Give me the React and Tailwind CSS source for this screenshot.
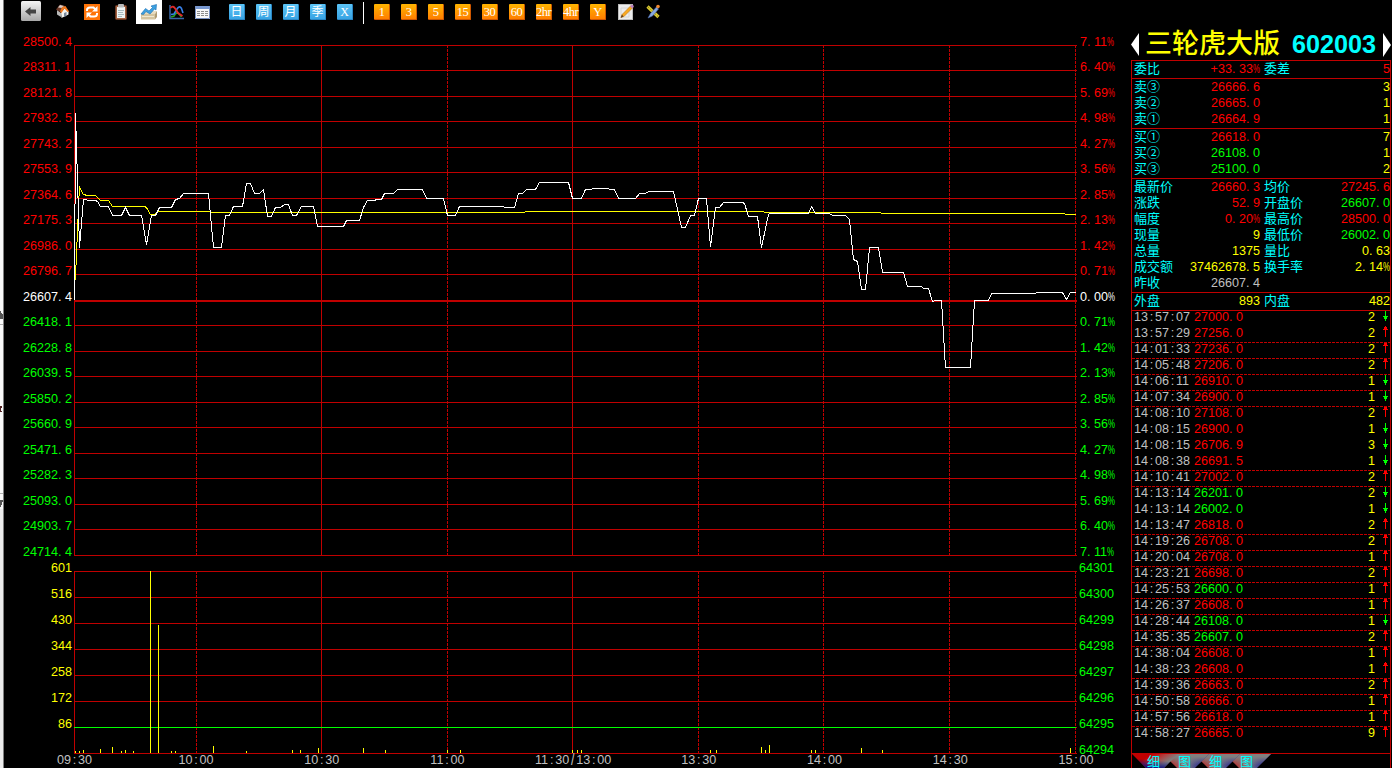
/**
 * 分時走勢畫面：工具列、分時圖、成交量、盤口與逐筆明細
 */

const CJK = "font-['Liberation_Sans','Noto_Sans_CJK_SC',sans-serif]";

// 價格刻度
const PRICES = [
  "28500.4", "28311.1", "28121.8", "27932.5", "27743.2", "27553.9", "27364.6",
  "27175.3", "26986.0", "26796.7", "26607.4", "26418.1", "26228.8", "26039.5",
  "25850.2", "25660.9", "25471.6", "25282.3", "25093.0", "24903.7", "24714.4",
];
const PERCENTS = [
  "7.11%", "6.40%", "5.69%", "4.98%", "4.27%", "3.56%", "2.85%", "2.13%", "1.42%", "0.71%", "0.00%",
  "0.71%", "1.42%", "2.13%", "2.85%", "3.56%", "4.27%", "4.98%", "5.69%", "6.40%", "7.11%",
];
const VOLUMES = ["601", "516", "430", "344", "258", "172", "86"];
const TOTALS = ["64301", "64300", "64299", "64298", "64297", "64296", "64295", "64294"];
const TIMES = ["10:00", "10:30", "11:00", "11:30/13:00", "13:30", "14:00", "14:30", "15:00"];

// 圖表座標 (x, y)
const PRICE_LINE =
  "74,300 75,113 79,247 83,199 86,199 87,200 95,200 97,201 100,206 108,206 112,215 121,215 125,207 129,215 141,215 146,244 151,215 155,215 159,207 171,207 175,199 179,198 183,193 208,193 213,247 221,247 225,215 229,215 233,206 242,206 246,183 250,183 254,193 259,193 263,189 267,216 271,216 275,207 280,207 284,204 288,204 292,215 296,215 301,206 313,206 317,226 343,226 346,220 359,220 363,207 367,200 374,200 376,199 381,199 384,193 393,193 397,189 422,189 426,198 443,198 447,215 455,215 459,206 503,206 504,207 514,207 518,193 522,193 526,189 535,189 539,182 568,182 572,198 581,198 585,189 591,189 592,188 608,188 609,189 614,189 618,198 635,198 639,193 645,193 648,191 673,191 681,227 685,227 690,215 694,215 698,198 706,198 710,246 715,207 719,207 723,202 742,202 744,203 748,216 757,216 761,247 765,228 768,214 769,213 808,213 811,206 815,213 829,213 832,215 845,215 849,219 853,259 857,261 861,289 865,289 869,247 878,247 882,272 903,272 907,286 921,286 923,288 928,288 932,301 935,300 941,300 945,367 970,367 974,300 988,300 991,293 1035,293 1036,292 1062,292 1066,299 1070,292 1075,292";
const AVG_LINE =
  "75,280 76,251 77,233 78,205 79,187 83,194 87,195 95,195 100,200 108,200 112,206 144,206 146,207 150,214 154,214 158,211 210,211 211,212 524,212 525,211 763,211 764,212 880,212 881,213 1064,213 1065,214 1075,214";
const BARS = [
  [75, 2], [79, 2], [83, 3], [100, 4], [112, 6], [121, 2], [125, 3], [133, 2], [150, 182], [158, 128],
  [171, 2], [175, 2], [213, 7], [246, 2], [292, 3], [300, 3], [318, 5], [363, 5], [385, 3], [447, 3],
  [460, 3], [572, 3], [577, 3], [581, 3], [710, 3], [716, 3], [761, 6], [765, 3], [769, 8], [811, 3],
  [815, 3], [861, 5], [882, 3], [1070, 5],
];
const V_LINES = [74, 196, 321, 447, 572, 698, 823, 949, 1075];
const SOLID = [74, 321, 572];

const RED = "text-[#ff0000]";
const GREEN = "text-[#00ff00]";
const YELLOW = "text-[#ffff00]";
const SILVER = "text-[#c0c0c0]";

const SELLS = [
  ["卖③", "26666.6", RED, "3"],
  ["卖②", "26665.0", RED, "1"],
  ["卖①", "26664.9", RED, "1"],
];
const BUYS = [
  ["买①", "26618.0", RED, "7"],
  ["买②", "26108.0", GREEN, "1"],
  ["买③", "25100.0", GREEN, "2"],
];
const STATS = [
  ["最新价", "26660.3", RED, "均价", "27245.6", RED],
  ["涨跌", "52.9", RED, "开盘价", "26607.0", GREEN],
  ["幅度", "0.20%", RED, "最高价", "28500.0", RED],
  ["现量", "9", YELLOW, "最低价", "26002.0", GREEN],
  ["总量", "1375", YELLOW, "量比", "0.63", YELLOW],
  ["成交额", "37462678.5", YELLOW, "换手率", "2.14%", YELLOW],
  ["昨收", "26607.4", SILVER, "", "", SILVER],
];

// 時間、價格、數量、是否上漲
const TICKS = [
  ["13:57:07", "27000.0", 2, false],
  ["13:57:29", "27256.0", 2, true],
  ["14:01:33", "27236.0", 2, true],
  ["14:05:48", "27206.0", 2, true],
  ["14:06:11", "26910.0", 1, false],
  ["14:07:34", "26900.0", 1, false],
  ["14:08:10", "27108.0", 2, true],
  ["14:08:15", "26900.0", 1, false],
  ["14:08:15", "26706.9", 3, false],
  ["14:08:38", "26691.5", 1, false],
  ["14:10:41", "27002.0", 2, true],
  ["14:13:14", "26201.0", 2, false],
  ["14:13:14", "26002.0", 1, false],
  ["14:13:47", "26818.0", 2, true],
  ["14:19:26", "26708.0", 2, true],
  ["14:20:04", "26708.0", 1, true],
  ["14:23:21", "26698.0", 2, true],
  ["14:25:53", "26600.0", 1, true],
  ["14:26:37", "26608.0", 1, true],
  ["14:28:44", "26108.0", 1, false],
  ["14:35:35", "26607.0", 2, true],
  ["14:38:04", "26608.0", 1, true],
  ["14:38:23", "26608.0", 1, true],
  ["14:39:36", "26663.0", 2, true],
  ["14:50:58", "26666.0", 1, true],
  ["14:57:56", "26618.0", 1, true],
  ["14:58:27", "26665.0", 9, true],
];

// 標點在 7px 字格內的位置
const CELLS = {
  ".": "text-left",
  ":": "text-center",
  "/": "text-center scale-y-[1.25]",
  "%": "origin-left scale-x-[0.62]",
};

// 等寬數字，每字 7px
function Num({ children, className = "" }) {
  const parts = String(children).split(/([.:/%])/).filter(Boolean);
  return (
    <span
      className={`block font-['Liberation_Sans',sans-serif] text-[12.6px] leading-4 whitespace-nowrap ${className}`}
    >
      {parts.map((part, i) =>
        CELLS[part] ? (
          <span key={i} className={`inline-block w-[7px] ${CELLS[part]}`}>
            {part}
          </span>
        ) : (
          part
        )
      )}
    </span>
  );
}

function BlueButton({ children }) {
  return (
    <div className="w-4 h-4 mr-[11px] rounded-[1px] bg-gradient-to-b from-[#5cc4f6] to-[#38a4e4] border-b border-r border-[#2a86c4] text-white text-[12px] leading-[17px] text-center font-['Liberation_Serif','Noto_Sans_CJK_SC',serif]">
      {children}
    </div>
  );
}

function OrangeButton({ children }) {
  return (
    <div className="w-4 h-4 mr-[11px] rounded-[1px] bg-gradient-to-b from-[#ffb400] to-[#ff7e00] border-b border-r border-[#d05800] flex justify-center text-white text-[12.5px] leading-[16px] tracking-[-0.5px] font-['Liberation_Serif',serif]">
      {children}
    </div>
  );
}

function Toolbar() {
  return (
    <div className="h-6 flex items-center">
      <svg className="ml-[17px] -mt-[2px]" width="20" height="20">
        <defs>
          <linearGradient id="back" x2="0" y2="1">
            <stop offset="0" stopColor="#f4f4f4" />
            <stop offset="1" stopColor="#a8a8a8" />
          </linearGradient>
        </defs>
        <rect width="20" height="20" rx="1.5" fill="url(#back)" />
        <path d="M4 10.5 L9.5 6 V8.5 H15 V12.5 H9.5 V15 Z" fill="#444" />
      </svg>
      <svg className="ml-[14px] -mt-[2px]" width="16" height="16">
        <path d="M2 7 L6 10 V14 L2 11.5 Z" fill="#b8b8b8" />
        <path d="M6 9 L10 5 L13.5 8 V11.5 L6.5 15 Z" fill="#f4f4f0" />
        <path d="M1 6.5 L5 1.5 L10 3 L6 9.5 Z" fill="#6c3a28" />
        <path d="M3 4.5 L5 2 L9 3 L7 5 Z" fill="#d8ccc8" />
        <path d="M7 4 L10.5 3 L14 8.5 L12.5 9 L9.5 5.5 L6.5 10 L5 8.5 Z" fill="#f07a20" />
        <path d="M9 10 L11.5 9 V13 L9 14 Z" fill="#78889c" />
      </svg>
      <svg className="ml-[13px]" width="16" height="16">
        <rect width="16" height="16" fill="#ff7408" />
        <g fill="none" stroke="#fff" strokeWidth="2">
          <path d="M3 7 V6 Q3 3.5 6 3.5 H9.5 L12 6" />
          <path d="M13 9 V10 Q13 12.5 10 12.5 H6.5 L4 10" />
        </g>
        <path d="M13.5 2 V7.5 H8 Z M2.5 14 V8.5 H8 Z" fill="#fff" />
      </svg>
      <svg className="ml-[15px]" width="12" height="16">
        <rect x="0.5" y="1.5" width="11" height="14" rx="1" fill="#a06040" stroke="#6c3820" />
        <rect x="2" y="3" width="8" height="11" fill="#eef4f4" />
        <rect x="3" y="0" width="6" height="3.5" rx="1" fill="#b8b8b8" />
        <path d="M3 6.5h6M3 8.5h5M3 10.5h6M3 12.5h4" stroke="#a8bcc0" />
      </svg>
      <div className="w-[26px] h-6 ml-[9px] bg-white flex items-center justify-center">
        <svg width="18" height="16">
          <path d="M1 10 L4 7 H17 L15 10 Z" fill="#e8dcc0" />
          <rect x="1" y="10" width="14" height="5.5" fill="#d4c4a0" />
          <path d="M15 10 L17 7 V13 L15 15.5 Z" fill="#b09c74" />
          <path d="M2 12.5h12" stroke="#f0e8d0" />
          <path d="M1 10 L5.5 4.5 L9 7 L12.5 3.5 L11 2 L16.5 0.5 L16 6 L14.5 5 L10 10 L6 7.5 L3.5 10.5 Z" fill="#3ca0e0" stroke="#1c70b4" strokeWidth="0.6" />
        </svg>
      </div>
      <svg className="ml-[7px]" width="15" height="15">
        <path d="M1 0 V13.5 H15" fill="none" stroke="#3868a8" strokeWidth="1.5" />
        <path d="M2 12 L5 11 Q8 6 10 9 L12.5 12" fill="none" stroke="#28a028" strokeWidth="1.6" />
        <path d="M2 9.5 L5 9 L8 4 Q10.5 0 12.5 3.5 L14 8" fill="none" stroke="#3880e8" strokeWidth="1.6" />
        <path d="M1.5 3 Q4 0 6.5 4 L9 8 L13.5 11" fill="none" stroke="#e02828" strokeWidth="1.8" />
      </svg>
      <svg className="ml-[11px]" width="15" height="13">
        <rect width="15" height="13" fill="#f8f8f8" />
        <rect width="15" height="3" fill="#7898d0" />
        <path d="M0.5 0 V12.5 H14.5 V0" fill="none" stroke="#7890c0" />
        <path d="M2 5.5h11M2 7.5h11M2 9.5h11" stroke="#8c8c8c" strokeDasharray="3 1" />
      </svg>
      <div className="w-[19px]" />
      {["日", "周", "月", "季", "X"].map((label) => (
        <BlueButton key={label}>{label}</BlueButton>
      ))}
      <div className="w-px h-[22px] mt-[2px] -ml-px mr-[10px] bg-white" />
      {["1", "3", "5", "15", "30", "60", "2hr", "4hr", "Y"].map((label) => (
        <OrangeButton key={label}>{label}</OrangeButton>
      ))}
      <svg className="ml-[1px]" width="16" height="16">
        <rect x="0.5" y="0.5" width="14" height="15" fill="#ececec" stroke="#bcbcbc" />
        <path d="M3 4h8v9h-8z" fill="none" stroke="#d4d4d4" />
        <path d="M3 13.5 L4 10.5 L13 1.5 L15 3.5 L6 12.5 Z" fill="#f8a820" stroke="#b07018" strokeWidth="0.5" />
        <path d="M12 2.5 L14 0.5 L16 2 L14.5 4.5 Z" fill="#b880c0" />
        <path d="M2.5 14 L4 10.5 L5.5 12.5 Z" fill="#604020" />
      </svg>
      <svg className="ml-[12px]" width="15" height="16">
        <path d="M1.5 2.5 L12.5 13" stroke="#d8c830" strokeWidth="3.2" />
        <path d="M2 3 L12 12.5" stroke="#706408" strokeWidth="1" strokeDasharray="1 1.5" />
        <path d="M2 14 L4.5 9.5 L10.5 3 L12.5 5 L6.5 12 Z" fill="#88a8e0" stroke="#4868a8" strokeWidth="0.6" />
        <circle cx="12" cy="2.5" r="1.8" fill="#f08830" />
      </svg>
    </div>
  );
}

// 價格與漲跌幅刻度，中線以上紅、以下綠
function PriceScale({ labels }) {
  return (
    <div className="flex flex-col">
      {labels.map((label, i) => (
        <div key={i} className={i === 20 ? "h-4" : i % 2 ? "h-[26px]" : "h-[25px]"}>
          <Num className={i < 10 ? RED : i === 10 ? "text-white" : GREEN}>{label}</Num>
        </div>
      ))}
    </div>
  );
}

function VolumeScale({ labels, className }) {
  return (
    <div className={`flex flex-col gap-[10px] ${className}`}>
      {labels.map((label) => (
        <Num key={label}>{label}</Num>
      ))}
    </div>
  );
}

function Chart() {
  const priceRows = PRICES.map((_, i) => 45 + Math.floor(i * 25.5));
  const volumeRows = TOTALS.map((_, i) => 571 + i * 26);
  return (
    <svg width="1004" height="731" viewBox="74 24 1004 731" shapeRendering="crispEdges" className="block">
      <g stroke="#c00000">
        {priceRows.map((y) => (
          <path key={y} d={`M74 ${y + 0.5}H1077`} />
        ))}
        <path d="M74 301.5H1077" />
        {volumeRows.map((y) => (
          <path key={y} d={`M74 ${y + 0.5}H1077`} />
        ))}
        {V_LINES.map((x) => (
          <path
            key={x}
            d={`M${x + 0.5} 45V556M${x + 0.5} 571V754`}
            strokeDasharray={SOLID.includes(x) ? undefined : "3 1"}
          />
        ))}
      </g>
      <path d="M74 727.5H1076" stroke="#00ff00" />
      {BARS.map(([x, h]) => (
        <rect key={x} x={x} y={753 - h} width="1" height={h} fill="#ffff00" />
      ))}
      <g fill="none" transform="translate(0.5 0.5)">
        <polyline points={AVG_LINE} stroke="#ffff00" />
        <polyline points={PRICE_LINE} stroke="#ffffff" />
      </g>
    </svg>
  );
}

function Label({ children, className = "" }) {
  return (
    <span className={`text-[#00ffff] text-[13px] leading-4 whitespace-nowrap ${CJK} ${className}`}>{children}</span>
  );
}

// 左右兩欄的一行報價
function QuoteRow({ left, value, color, right, value2, color2 }) {
  return (
    <div className="h-4 flex">
      <div className="w-[128px] pl-[2px] flex justify-between">
        <Label>{left}</Label>
        {value && <Num className={color}>{value}</Num>}
      </div>
      <div className="flex-1 pl-1 flex justify-between">
        <Label>{right}</Label>
        {value2 && <Num className={color2}>{value2}</Num>}
      </div>
    </div>
  );
}

function Arrow({ up }) {
  return (
    <svg width="5" height="12" shapeRendering="crispEdges" className="mr-[2px]">
      {up ? (
        <path d="M2 0h1v11h-1zM1 1h3v2h-3zM0 3h5v1h-5z" fill="#ff0000" />
      ) : (
        <path d="M2 1h1v10h-1zM0 6h5v1h-5zM1 7h3v2h-3z" fill="#00ff00" />
      )}
    </svg>
  );
}

function Tabs() {
  return (
    <div className="relative h-[14px] overflow-hidden">
      <svg width="140" height="14" className="block">
        <defs>
          <linearGradient id="tabOn" x1="0" y1="0" x2="1" y2="0.5">
            <stop offset="0.35" stopColor="#c00000" />
            <stop offset="0.6" stopColor="#b04040" />
            <stop offset="0.85" stopColor="#808080" />
          </linearGradient>
          <linearGradient id="tabOff" x1="0" y1="0.6" x2="1" y2="0.6">
            <stop offset="0.15" stopColor="#c02020" />
            <stop offset="0.5" stopColor="#808080" />
            <stop offset="0.8" stopColor="#303090" />
          </linearGradient>
          <linearGradient id="tabTop" x2="0" y2="1">
            <stop offset="0.2" stopColor="#808080" />
            <stop offset="0.8" stopColor="#808080" stopOpacity="0" />
          </linearGradient>
          <linearGradient id="tabBlue" x1="0.5" y1="0" x2="0.2" y2="1">
            <stop offset="0.4" stopColor="#000080" stopOpacity="0" />
            <stop offset="1" stopColor="#000080" />
          </linearGradient>
        </defs>
        {[93, 62, 31].map((x) => (
          <g key={x}>
            <path d={`M${x} 0h46l-14 14h-18z`} fill="url(#tabOff)" />
            <path d={`M${x} 0h46l-14 14h-18z`} fill="url(#tabTop)" />
          </g>
        ))}
        <path d="M0 0h46l-14 14h-18z" fill="url(#tabOn)" />
        <path d="M0 0h46l-14 14h-18z" fill="url(#tabBlue)" />
      </svg>
      <div className="absolute left-[15px] top-0 flex gap-[18px]">
        {["细", "图", "细", "图"].map((t, i) => (
          <Label key={i}>{t}</Label>
        ))}
      </div>
    </div>
  );
}

function QuotePanel() {
  return (
    <div className="w-[260px] flex flex-col">
      <div className="h-9 flex items-center">
        <svg width="8" height="24" className="mt-[6px]">
          <path d="M8 0V23L0 11.5Z" fill="#fff" />
        </svg>
        <span className={`ml-[6px] mt-[3px] text-[27px] leading-9 font-medium text-[#ffff00] whitespace-nowrap ${CJK}`}>
          三轮虎大版
        </span>
        <span className="ml-[12px] mt-[3px] text-[25.2px] leading-9 font-bold text-[#00ffff] font-['Liberation_Sans',sans-serif]">
          602003
        </span>
        <svg width="8" height="24" className="ml-auto mt-[6px] shrink-0">
          <path d="M0 0V24L8 12Z" fill="#fff" />
        </svg>
      </div>

      <div className="h-[708px] border-x border-[#c00000] flex flex-col">
        <div className="h-[18px] border-t border-[#c00000]">
          <QuoteRow left="委比" value="+33.33%" color={RED} right="委差" value2="5" color2={RED} />
        </div>
        {[SELLS, BUYS].map((rows, i) => (
          <div key={i} className="h-[50px] border-t border-[#c00000]">
            {rows.map(([name, price, color, qty]) => (
              <QuoteRow key={name} left={name} value={price} color={color} value2={qty} color2={YELLOW} />
            ))}
          </div>
        ))}
        <div className="h-[114px] border-t border-[#c00000]">
          {STATS.map(([left, value, color, right, value2, color2]) => (
            <QuoteRow key={left} {...{ left, value, color, right, value2, color2 }} />
          ))}
        </div>
        <div className="h-[18px] border-t border-[#c00000]">
          <QuoteRow left="外盘" value="893" color={YELLOW} right="内盘" value2="482" color2={YELLOW} />
        </div>

        {/* 逐筆成交，分鐘變更時畫虛線 */}
        <div className="h-[443px]">
          {TICKS.map(([time, price, qty, up], i) => {
            const newMinute = i > 0 && TICKS[i - 1][0].slice(0, 5) !== time.slice(0, 5);
            return (
              <div key={i} className="h-4 relative">
                {(i === 0 || newMinute) && (
                  <svg className="absolute left-0 top-0" width="258" height="1" shapeRendering="crispEdges">
                    <path d="M0 0.5H258" stroke="#c00000" strokeDasharray={i ? "3 1" : undefined} />
                  </svg>
                )}
                <div className="flex">
                  <Num className={`-mt-px ml-[2px] w-[60px] ${SILVER}`}>{time}</Num>
                  <Num className={`-mt-px ${parseFloat(price) > 26607.4 ? RED : GREEN}`}>{price}</Num>
                  <Num className={`-mt-px ml-auto mr-2 ${YELLOW}`}>{qty}</Num>
                  <Arrow up={up} />
                </div>
              </div>
            );
          })}
        </div>
        <div className="border-t border-[#c00000]">
          <Tabs />
        </div>
      </div>
    </div>
  );
}

export default function App() {
  return (
    <div className="w-[1392px] h-[768px] flex bg-black overflow-hidden">
      {/* 左側視窗邊緣 */}
      <svg width="4" height="768" className="block shrink-0" shapeRendering="crispEdges">
        <rect width="3" height="768" fill="#f8f8f8" />
        <rect y="509" width="3" height="259" fill="#ececec" />
        <rect x="3" width="1" height="768" fill="#808080" />
        <path d="M0 310L3 315V319H0zM0 500H3L1 507H0z" fill="#555" />
        <path d="M0 324.5H3M0 493.5H3" stroke="#b0b0b0" />
        <path d="M0 406h2v2h-1v3h1v1h-2z" fill="#502020" />
      </svg>

      <div className="flex-1 flex flex-col">
        <Toolbar />
        <div className="flex-1 flex">
          <div className="w-[1127px] flex flex-col">
            <div className="h-[731px] flex">
              <div className="w-[70px] pr-[2px] pt-[10px] flex flex-col items-end">
                <PriceScale labels={PRICES} />
                <VolumeScale labels={VOLUMES} className={`items-end ${YELLOW}`} />
              </div>
              <Chart />
              <div className="pl-[1px] pt-[10px]">
                <div className="pl-px">
                  <PriceScale labels={PERCENTS} />
                </div>
                <VolumeScale labels={TOTALS} className={GREEN} />
              </div>
            </div>
            <div className={`flex h-[13px] ${SILVER}`}>
              <div className="ml-[53px] w-[35px] -mt-[3px]">
                <Num>09:30</Num>
              </div>
              <div className="ml-[104px] w-[880px] -mt-[3px] flex justify-between">
                {TIMES.map((t) => (
                  <div key={t} className="w-0 flex justify-center">
                    <Num>{t}</Num>
                  </div>
                ))}
              </div>
            </div>
          </div>
          <QuotePanel />
        </div>
      </div>
    </div>
  );
}
